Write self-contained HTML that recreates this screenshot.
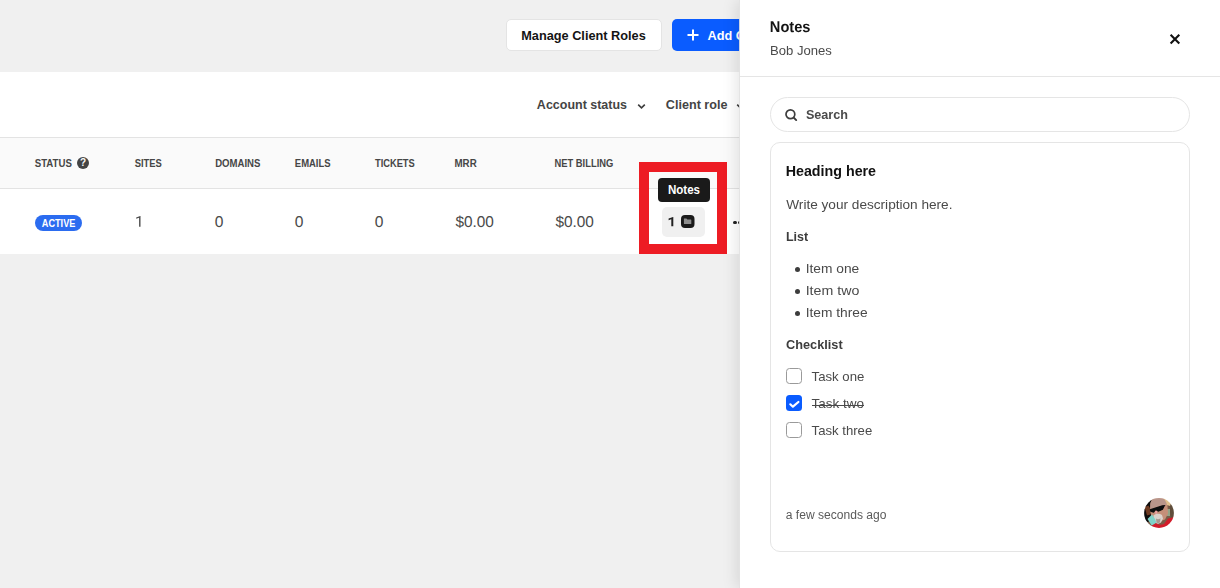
<!DOCTYPE html>
<html><head><meta charset="utf-8">
<style>
*{box-sizing:border-box;margin:0;padding:0}
html,body{width:1220px;height:588px;overflow:hidden;background:#f0f0f0;font-family:"Liberation Sans",sans-serif;color:#1a1a1a}
.abs{position:absolute}
.t{position:absolute;white-space:nowrap;transform-origin:0 0;line-height:1.2}
#bmanage{position:absolute;left:506px;top:19px;width:156px;height:32px;border-radius:5px;background:#fff;border:1px solid #e4e4e4}
#addb{position:absolute;left:672px;top:19px;width:120px;height:32px;border-radius:5px;background:#0a5cff}
#filter{position:absolute;left:0;top:72px;width:1220px;height:66px;background:#fff;border-bottom:1px solid #e3e3e3}
#thead{position:absolute;left:0;top:138px;width:1220px;height:51px;background:#fafafa;border-bottom:1px solid #e3e3e3}
#row{position:absolute;left:0;top:189px;width:1220px;height:65px;background:#fff}
#panel{position:absolute;left:740px;top:0;width:480px;height:588px;background:#fff;box-shadow:-4px 0 14px rgba(0,0,0,.10)}
</style></head><body>
<div id="bmanage"></div>
<div id="addb"></div>
<svg class="abs" style="left:687px;top:29px" width="12" height="12" viewBox="0 0 12 12"><path d="M6 0.5v11M0.5 6h11" stroke="#fff" stroke-width="2" fill="none"/></svg>
<div id="filter"></div>
<svg class="abs" style="left:637px;top:102.7px" width="9" height="7" viewBox="0 0 9 7"><path d="M1.2 1.6l3.3 3.3 3.3-3.3" stroke="#3d3d3d" stroke-width="1.6" fill="none"/></svg>
<svg class="abs" style="left:735.5px;top:102.7px" width="9" height="7" viewBox="0 0 9 7"><path d="M1.2 1.6l3.3 3.3 3.3-3.3" stroke="#3d3d3d" stroke-width="1.6" fill="none"/></svg>
<div id="thead"></div>
<div class="abs" style="left:77px;top:157px;width:12px;height:12px;border-radius:6px;background:#444;color:#fafafa;font-size:10px;font-weight:bold;text-align:center;line-height:12.5px">?</div>
<div id="row"></div>
<div class="abs" style="left:35px;top:215px;width:47px;height:16px;border-radius:8px;background:#2b6cf0"></div>
<div class="abs" style="left:733.3px;top:220.7px;width:3.3px;height:3.3px;border-radius:2px;background:#222"></div>
<div class="abs" style="left:738.1px;top:220.7px;width:3.3px;height:3.3px;border-radius:2px;background:#222"></div>
<!-- highlight -->
<div class="abs" style="left:639px;top:162px;width:88px;height:92px;border:10px solid #ed1c24"></div>
<div class="abs" style="left:658px;top:178px;width:52px;height:24px;border-radius:4px;background:#1a1a1a"></div>
<div class="abs" style="left:662px;top:207px;width:43px;height:30px;border-radius:5px;background:#f0f0f0"></div>
<svg class="abs" style="left:681px;top:215px" width="13.5" height="13" viewBox="0 0 13.5 13"><rect width="13.5" height="13" rx="4" fill="#1a1a1a"/><path d="M2.9 3.5h2.5l1 1.1h3.4q0.5 0 0.5 0.5v3.5q0 0.5-0.5 0.5h-6.4q-0.5 0-0.5-0.5z" fill="#8e8e8e"/></svg>
<svg class="abs" style="left:135.8px;top:216px" width="6" height="11" viewBox="0 0 6 11"><path d="M4.5 0V10.8H3.1V1.75L0.2 2.8V1.5L4.2 0Z" fill="#4a4a4a"/></svg>
<svg class="abs" style="left:668.2px;top:217px" width="6" height="10" viewBox="0 0 6 10"><path d="M5.3 0V9.2H3.3V2.3L0.6 3.15V1.55L5 0Z" fill="#222"/></svg>
<div id="manage" class="t" style="left:0;top:28.0px;font-size:13px;font-weight:bold;color:#141414;transform:translateX(521.22px) scaleX(0.9797);">Manage Client Roles</div>
<div id="add" class="t" style="left:0;top:28.0px;font-size:13px;font-weight:bold;color:#ffffff;transform:translateX(707.56px) scaleX(0.9797);">Add Client</div>
<div id="acct" class="t" style="left:0;top:97.0px;font-size:13px;font-weight:bold;color:#444444;transform:translateX(536.87px) scaleX(0.9602);">Account status</div>
<div id="role" class="t" style="left:0;top:97.0px;font-size:13px;font-weight:bold;color:#444444;transform:translateX(665.82px) scaleX(0.9696);">Client role</div>
<div id="h1" class="t" style="left:0;top:158.0px;font-size:10px;font-weight:bold;color:#464646;transform:translateX(34.71px) scaleX(0.9642);">STATUS</div>
<div id="h2" class="t" style="left:0;top:158.0px;font-size:10px;font-weight:bold;color:#464646;transform:translateX(134.72px) scaleX(0.9393);">SITES</div>
<div id="h3" class="t" style="left:0;top:158.0px;font-size:10px;font-weight:bold;color:#464646;transform:translateX(215.17px) scaleX(0.9578);">DOMAINS</div>
<div id="h4" class="t" style="left:0;top:158.0px;font-size:10px;font-weight:bold;color:#464646;transform:translateX(294.83px) scaleX(0.9469);">EMAILS</div>
<div id="h5" class="t" style="left:0;top:158.0px;font-size:10px;font-weight:bold;color:#464646;transform:translateX(374.96px) scaleX(0.9302);">TICKETS</div>
<div id="h6" class="t" style="left:0;top:158.0px;font-size:10px;font-weight:bold;color:#464646;transform:translateX(454.47px) scaleX(0.9747);">MRR</div>
<div id="h7" class="t" style="left:0;top:158.0px;font-size:10px;font-weight:bold;color:#464646;transform:translateX(554.49px) scaleX(0.9366);">NET BILLING</div>
<div id="active" class="t" style="left:0;top:218.0px;font-size:10px;font-weight:bold;color:#ffffff;transform:translateX(41.77px) scaleX(0.9167);">ACTIVE</div>
<div id="v2" class="t" style="left:0;top:214.0px;font-size:15.6px;font-weight:normal;color:#4a4a4a;transform:translateX(214.80px) scaleX(1.0000);text-rendering:geometricPrecision;">0</div>
<div id="v3" class="t" style="left:0;top:214.0px;font-size:15.6px;font-weight:normal;color:#4a4a4a;transform:translateX(294.80px) scaleX(1.0000);text-rendering:geometricPrecision;">0</div>
<div id="v4" class="t" style="left:0;top:214.0px;font-size:15.6px;font-weight:normal;color:#4a4a4a;transform:translateX(374.80px) scaleX(1.0000);text-rendering:geometricPrecision;">0</div>
<div id="v5" class="t" style="left:0;top:214.0px;font-size:15.6px;font-weight:normal;color:#4a4a4a;transform:translateX(455.45px) scaleX(0.9856);text-rendering:geometricPrecision;">$0.00</div>
<div id="v6" class="t" style="left:0;top:214.0px;font-size:15.6px;font-weight:normal;color:#4a4a4a;transform:translateX(555.45px) scaleX(0.9856);text-rendering:geometricPrecision;">$0.00</div>
<div id="tip" class="t" style="left:0;top:182.0px;font-size:13px;font-weight:bold;color:#ffffff;transform:translateX(667.89px) scaleX(0.8906);">Notes</div>
<div id="panel"></div>
<div class="abs" style="left:739px;top:0;width:1px;height:588px;background:rgba(226,226,226,.9)"></div>
<svg class="abs" style="left:1169px;top:33px" width="12" height="12" viewBox="0 0 12 12"><path d="M1.6 1.7l8.7 8.7M10.3 1.7l-8.7 8.7" stroke="#111" stroke-width="2.1" fill="none"/></svg>
<div class="abs" style="left:740px;top:76px;width:480px;height:1px;background:#e5e5e5"></div>
<div class="abs" style="left:770px;top:97px;width:420px;height:35px;border:1px solid #e5e5e5;border-radius:17.5px"></div>
<svg class="abs" style="left:784px;top:108px" width="14" height="14" viewBox="0 0 14 14"><circle cx="6.4" cy="6.3" r="4.4" stroke="#3d3d3d" stroke-width="1.7" fill="none"/><path d="M9.6 9.5l2.6 2.6" stroke="#3d3d3d" stroke-width="1.9" stroke-linecap="round"/></svg>
<div class="abs" style="left:770px;top:142px;width:420px;height:410px;border:1px solid #e5e5e5;border-radius:10px"></div>
<div class="abs" style="left:794.5px;top:266.5px;width:5px;height:5px;border-radius:3px;background:#3d3d3d"></div>
<div class="abs" style="left:794.5px;top:288.5px;width:5px;height:5px;border-radius:3px;background:#3d3d3d"></div>
<div class="abs" style="left:794.5px;top:310.5px;width:5px;height:5px;border-radius:3px;background:#3d3d3d"></div>
<div class="abs" style="left:786px;top:368px;width:16px;height:16px;border:1px solid #9a9a9a;border-radius:3.5px;background:#fff"></div>
<div class="abs" style="left:786px;top:395px;width:16px;height:16px;border-radius:3.5px;background:#0a5cff"></div>
<svg class="abs" style="left:786px;top:395px" width="16" height="16" viewBox="0 0 16 16"><path d="M4.3 9.3l2.6 2.4L12.4 7.0" stroke="#fff" stroke-width="2.2" stroke-linecap="round" stroke-linejoin="round" fill="none"/></svg>
<div class="abs" style="left:786px;top:422px;width:16px;height:16px;border:1px solid #9a9a9a;border-radius:3.5px;background:#fff"></div>
<svg class="abs" style="left:1144px;top:498px" width="30" height="30" viewBox="0 0 30 30">
  <defs><clipPath id="c"><circle cx="15" cy="15" r="14.9"/></clipPath><filter id="b" x="-10%" y="-10%" width="120%" height="120%"><feGaussianBlur stdDeviation="0.7"/></filter></defs>
  <g clip-path="url(#c)"><g filter="url(#b)">
    <rect x="-2" y="-2" width="34" height="34" fill="#7a5c48"/>
    <path d="M-2 -2h10l-1 8 0 8 1 7-4 3-6 2z" fill="#0d0908"/>
    <path d="M0.5 9l4-1.5 3 5-1 4-3.5 1z" fill="#6e3a22"/>
    
    <path d="M25.5 6l5-1v16l-4-1z" fill="#5e4e3a"/>
    <path d="M23 11h3v7h-3z" fill="#93a487"/>
    <path d="M6.5 5c1-5 6-6 10-5.5s6.5 3 7 8l0.5 8-3 6-8 3-5-4-2-8z" fill="#c58f79"/>
    <path d="M6.3 6c1-5 5-6.5 9.5-6s6 2.5 7 6.5l-4.5 1-12 3.5z" fill="#b9958a"/><path d="M19 0l5 1 3 4-1 3-3-1c-0.5-3-2-5-4-7z" fill="#dfc08f"/>
    <path d="M11 12.5l1.8 0 0.5 3-2 0.3z" fill="#eea0a2"/>
    <path d="M5.8 11.3l12.5-4 3.2-0.3-1 1.6-1.6 3.2-4.6 1.9-2.4-1.4-2.2 2.4-3.4-0.9z" fill="#0a0a0a"/>
    <path d="M9.5 17.5c2-2.2 6-2.4 8.5-0.6l1 3.5-2 4-4 2-3.5-3z" fill="#dcd2cb"/>
    <path d="M12 20.5c1.5 1 3 0.8 4.5-0.3l-0.5 4-2 1.5-1.5-1z" fill="#a89890"/>
    <path d="M3.5 21l4.5-4.5 3 4.5 1.5 4-4.5 3z" fill="#7fd3c9"/>
    <path d="M6 28.5l6-3.5 3.5 2 4.5-1 4-5.5 6.5-1.5v13h-25z" fill="#d21f2b"/>
  </g></g>
</svg>
<div style="position:absolute;left:0;top:0;width:1220px;height:588px;will-change:transform">
<div id="pt" class="t" style="left:0;top:19.0px;font-size:15.5px;font-weight:bold;color:#141414;transform:translateX(769.86px) scaleX(0.9430);text-rendering:geometricPrecision;">Notes</div>
<div id="ps" class="t" style="left:0;top:43.0px;font-size:13px;font-weight:normal;color:#4a4a4a;transform:translateX(769.99px) scaleX(1.0067);">Bob Jones</div>
<div id="search" class="t" style="left:0;top:107.0px;font-size:13px;font-weight:bold;color:#4a4a4a;transform:translateX(805.91px) scaleX(0.9704);">Search</div>
<div id="head" class="t" style="left:0;top:162.0px;font-size:15px;font-weight:bold;color:#111111;transform:translateX(785.70px) scaleX(0.9508);">Heading here</div>
<div id="desc" class="t" style="left:0;top:197.0px;font-size:13px;font-weight:normal;color:#4a4a4a;transform:translateX(786.24px) scaleX(1.0474);">Write your description here.</div>
<div id="list" class="t" style="left:0;top:229.0px;font-size:13px;font-weight:bold;color:#3d3d3d;transform:translateX(785.93px) scaleX(0.9618);">List</div>
<div id="i1" class="t" style="left:0;top:261.0px;font-size:13px;font-weight:normal;color:#4a4a4a;transform:translateX(805.68px) scaleX(1.0585);">Item one</div>
<div id="i2" class="t" style="left:0;top:283.0px;font-size:13px;font-weight:normal;color:#4a4a4a;transform:translateX(805.63px) scaleX(1.0921);">Item two</div>
<div id="i3" class="t" style="left:0;top:305.0px;font-size:13px;font-weight:normal;color:#4a4a4a;transform:translateX(805.68px) scaleX(1.0590);">Item three</div>
<div id="chk" class="t" style="left:0;top:337.0px;font-size:13px;font-weight:bold;color:#3d3d3d;transform:translateX(786.01px) scaleX(0.9799);">Checklist</div>
<div id="t1" class="t" style="left:0;top:369.0px;font-size:13px;font-weight:normal;color:#4a4a4a;transform:translateX(811.55px) scaleX(1.0137);">Task one</div>
<div id="t2" class="t" style="left:0;top:396.0px;font-size:13px;font-weight:normal;color:#4a4a4a;transform:translateX(811.54px) scaleX(1.0392);">Task two</div>
<div id="t3" class="t" style="left:0;top:423.0px;font-size:13px;font-weight:normal;color:#4a4a4a;transform:translateX(811.55px) scaleX(1.0119);">Task three</div>
<div id="ago" class="t" style="left:0;top:508.0px;font-size:12px;font-weight:normal;color:#5a5a5a;transform:translateX(785.80px) scaleX(1.0061);">a few seconds ago</div>
<div class="abs" style="left:812px;top:405px;width:52px;height:1px;background:#4a4a4a"></div>
</div>
</body></html>
